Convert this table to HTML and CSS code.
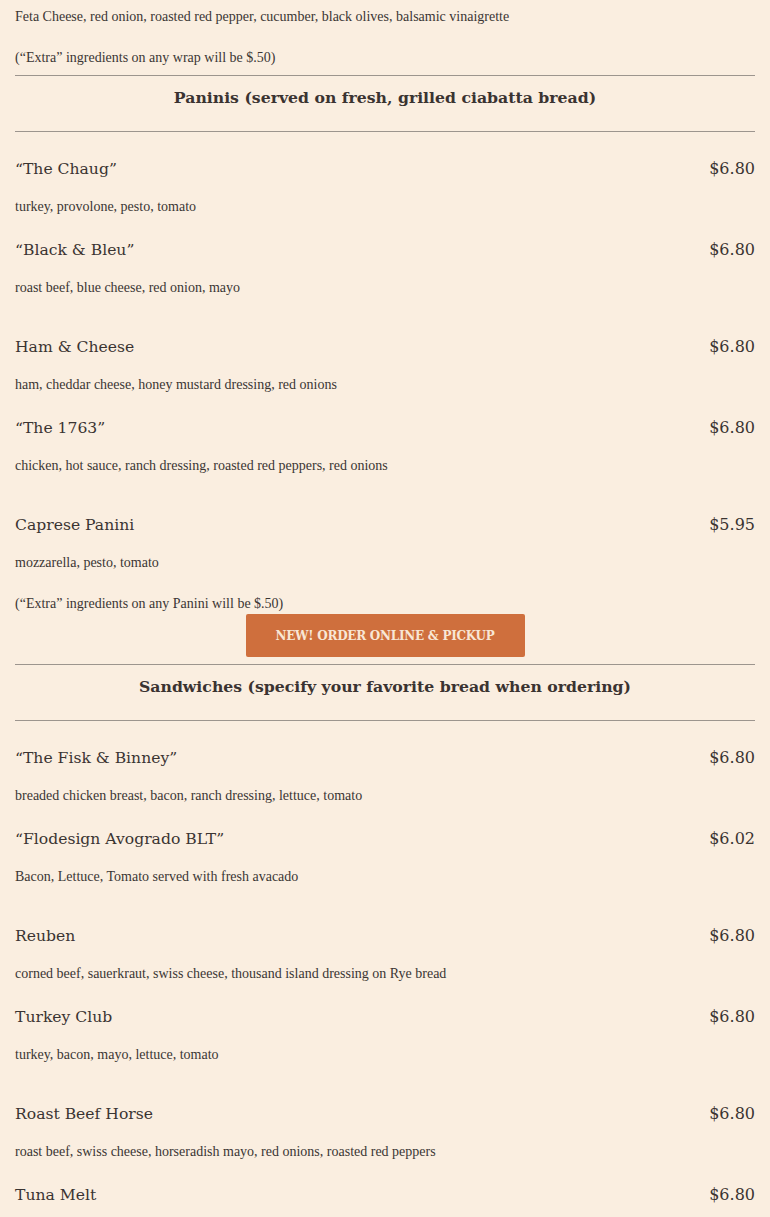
FILE: index.html
```html
<!DOCTYPE html>
<html lang="en">
<head>
<meta charset="utf-8">
<title>Menu</title>
<link rel="stylesheet" href="styles.css">
</head>
<body>
<main class="menu">
  <p class="desc first">Feta Cheese, red onion, roasted red pepper, cucumber, black olives, balsamic vinaigrette</p>
  <p class="desc note">(“Extra” ingredients on any wrap will be $.50)</p>

  <hr class="rule top">
  <h2 class="section-title">Paninis (served on fresh, grilled ciabatta bread)</h2>
  <hr class="rule bottom">

  <div class="group">
    <div class="item">
      <div class="item-head"><span class="name">“The Chaug”</span><span class="price">$6.80</span></div>
      <p class="desc">turkey, provolone, pesto, tomato</p>
    </div>
    <div class="item">
      <div class="item-head"><span class="name">“Black &amp; Bleu”</span><span class="price">$6.80</span></div>
      <p class="desc">roast beef, blue cheese, red onion, mayo</p>
    </div>
  </div>
  <div class="group">
    <div class="item">
      <div class="item-head"><span class="name">Ham &amp; Cheese</span><span class="price">$6.80</span></div>
      <p class="desc">ham, cheddar cheese, honey mustard dressing, red onions</p>
    </div>
    <div class="item">
      <div class="item-head"><span class="name">“The 1763”</span><span class="price">$6.80</span></div>
      <p class="desc">chicken, hot sauce, ranch dressing, roasted red peppers, red onions</p>
    </div>
  </div>
  <div class="group">
    <div class="item">
      <div class="item-head"><span class="name">Caprese Panini</span><span class="price">$5.95</span></div>
      <p class="desc">mozzarella, pesto, tomato</p>
    </div>
  </div>
  <p class="desc note">(“Extra” ingredients on any Panini will be $.50)</p>
  <div class="cta-wrap"><a class="cta" href="#">New! Order Online &amp; Pickup</a></div>

  <hr class="rule top">
  <h2 class="section-title">Sandwiches (specify your favorite bread when ordering)</h2>
  <hr class="rule bottom">

  <div class="group">
    <div class="item">
      <div class="item-head"><span class="name">“The Fisk &amp; Binney”</span><span class="price">$6.80</span></div>
      <p class="desc">breaded chicken breast, bacon, ranch dressing, lettuce, tomato</p>
    </div>
    <div class="item">
      <div class="item-head"><span class="name">“Flodesign Avogrado BLT”</span><span class="price">$6.02</span></div>
      <p class="desc">Bacon, Lettuce, Tomato served with fresh avacado</p>
    </div>
  </div>
  <div class="group">
    <div class="item">
      <div class="item-head"><span class="name">Reuben</span><span class="price">$6.80</span></div>
      <p class="desc">corned beef, sauerkraut, swiss cheese, thousand island dressing on Rye bread</p>
    </div>
    <div class="item">
      <div class="item-head"><span class="name">Turkey Club</span><span class="price">$6.80</span></div>
      <p class="desc">turkey, bacon, mayo, lettuce, tomato</p>
    </div>
  </div>
  <div class="group">
    <div class="item">
      <div class="item-head"><span class="name">Roast Beef Horse</span><span class="price">$6.80</span></div>
      <p class="desc">roast beef, swiss cheese, horseradish mayo, red onions, roasted red peppers</p>
    </div>
    <div class="item">
      <div class="item-head"><span class="name">Tuna Melt</span><span class="price">$6.80</span></div>
      <p class="desc">tuna, cheddar cheese, tomato</p>
    </div>
  </div>
</main>
</body>
</html>
```

FILE: styles.css
```css
html, body {
  margin: 0;
  padding: 0;
  background: #faeee0;
}

.menu {
  padding: 7px 15px 40px;
  color: #333030;
}

.desc {
  margin: 0;
  font-family: "Liberation Serif", "Times New Roman", serif;
  font-size: 14px;
  line-height: 20px;
  color: #3a3634;
}

.desc.note {
  margin-top: 21px;
}

.rule {
  border: 0;
  height: 1px;
  background: #9c958e;
  margin: 0;
}

.rule.top {
  margin-top: 7px;
}

.rule.bottom {
  margin-top: 20px;
}

.section-title {
  margin: 9px 0 0;
  text-align: center;
  font-family: "DejaVu Serif", Georgia, serif;
  font-weight: bold;
  font-size: 15.7px;
  line-height: 26px;
  color: #3a3331;
}

.group {
  display: flex;
  flex-direction: column;
  gap: 21px;
  margin-top: 37px;
}

.rule.bottom + .group {
  margin-top: 25px;
}

.item {
  display: flex;
  flex-direction: column;
  gap: 16px;
}

.item-head {
  display: flex;
  justify-content: space-between;
  align-items: center;
  height: 24px;
  font-family: "DejaVu Serif", Georgia, serif;
  font-size: 15.6px;
  line-height: 24px;
  color: #3a3432;
}

.price {
  font-size: 16px;
}

.cta-wrap {
  display: flex;
  justify-content: center;
  margin-top: 0;
}

.cta {
  display: flex;
  align-items: center;
  justify-content: center;
  width: 279px;
  height: 43px;
  background: #cf6f3d;
  border-radius: 2px;
  color: #f8e7d6;
  text-decoration: none;
  text-transform: uppercase;
  font-family: "DejaVu Serif", Georgia, serif;
  font-weight: bold;
  font-size: 12px;
  letter-spacing: -0.25px;
}
```
